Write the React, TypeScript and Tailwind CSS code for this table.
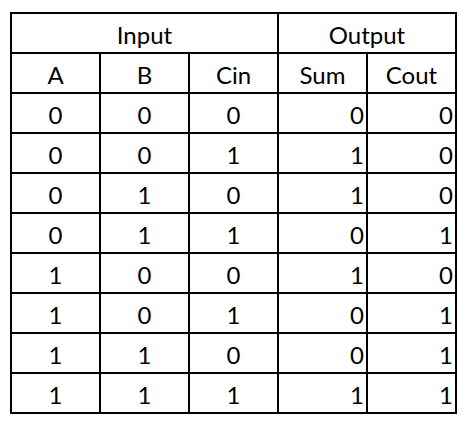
import React from 'react'

const rows = [
  [0, 0, 0, 0, 0],
  [0, 0, 1, 1, 0],
  [0, 1, 0, 1, 0],
  [0, 1, 1, 0, 1],
  [1, 0, 0, 1, 0],
  [1, 0, 1, 0, 1],
  [1, 1, 0, 0, 1],
  [1, 1, 1, 1, 1],
]

const headers = ['A', 'B', 'Cin', 'Sum', 'Cout']

const cell = 'bg-white h-[38px] flex items-center pt-[3px] leading-none'

const App = () => {
  return (
    <div
      className="w-[466px] h-[424px] bg-white pt-[12px] pl-[10px] text-black"
      style={{ fontFamily: 'Lato, "Open Sans", sans-serif' }}
    >
      <div className="grid grid-cols-[repeat(5,87px)] gap-[2px] bg-black p-[2px] w-fit text-[24px]">
        <div className={cell + ' col-span-3 justify-center'}>Input</div>
        <div className={cell + ' col-span-2 justify-center'}>Output</div>
        {headers.map((h) => (
          <div key={h} className={cell + ' justify-center'}>
            {h}
          </div>
        ))}
        {rows.map((r, i) =>
          r.map((v, j) => (
            <div
              key={i + '-' + j}
              className={cell + (j < 3 ? ' justify-center' : ' justify-end pr-[2px]')}
            >
              {v}
            </div>
          ))
        )}
      </div>
    </div>
  )
}

export default App
